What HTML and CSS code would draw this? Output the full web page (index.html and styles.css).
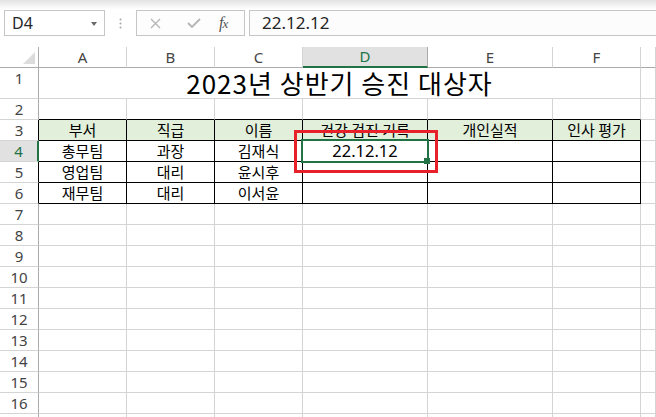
FILE: index.html
```html
<!DOCTYPE html>
<html>
  <head>
    <title>승진 대상자</title>
    <link rel="stylesheet" href="styles.css">
  </head>
  <body>
    <div class="topbar">
      <div class="namebox">
        <span>D4</span>
        <span class="arrow"></span>
      </div>
      <div class="grip">
        <svg width="3" height="11" viewBox="0 0 3 11">
          <circle cx="1.5" cy="1.5" r="1" fill="#a6a6a6" />
          <circle cx="1.5" cy="5.5" r="1" fill="#a6a6a6" />
          <circle cx="1.5" cy="9.5" r="1" fill="#a6a6a6" />
        </svg>
      </div>
      <div class="fxbox">
        <svg class="btn-x" width="11" height="11" viewBox="0 0 11 11">
          <path d="M1 1 L10 10 M10 1 L1 10" stroke="#b4b4b4" stroke-width="1.3" fill="none" />
        </svg>
        <svg class="btn-ok" width="14" height="10" viewBox="0 0 14 10">
          <path d="M1 5 L5 9 L13 1" stroke="#b4b4b4" stroke-width="1.8" fill="none" />
        </svg>
        <span class="fx"><i>f</i><i class="fx-x">x</i></span>
      </div>
      <div class="formula">22.12.12</div>
    </div>

    <div class="sheet">
      <!-- column headers -->
      <div class="corner"></div>
      <div class="hd">A</div>
      <div class="hd">B</div>
      <div class="hd">C</div>
      <div class="hd sel">D</div>
      <div class="hd">E</div>
      <div class="hd">F</div>
      <div class="hd"></div>

      <!-- row 1 -->
      <div class="rh">1</div>
      <div class="c title">2023년 상반기 승진 대상자</div>
      <div class="c"></div>

      <!-- row 2 -->
      <div class="rh">2</div>
      <div class="c above"></div>
      <div class="c above"></div>
      <div class="c above"></div>
      <div class="c above"></div>
      <div class="c above"></div>
      <div class="c above"></div>
      <div class="c"></div>

      <!-- row 3 -->
      <div class="rh edge">3</div>
      <div class="c tbl head">부서</div>
      <div class="c tbl head">직급</div>
      <div class="c tbl head">이름</div>
      <div class="c tbl head">건강 검진 기록</div>
      <div class="c tbl head">개인실적</div>
      <div class="c tbl head">인사 평가</div>
      <div class="c"></div>

      <!-- row 4 -->
      <div class="rh sel">4</div>
      <div class="c tbl">총무팀</div>
      <div class="c tbl">과장</div>
      <div class="c tbl">김재식</div>
      <div class="c tbl date">22.12.12</div>
      <div class="c tbl"></div>
      <div class="c tbl"></div>
      <div class="c"></div>

      <!-- row 5 -->
      <div class="rh edge">5</div>
      <div class="c tbl">영업팀</div>
      <div class="c tbl">대리</div>
      <div class="c tbl">윤시후</div>
      <div class="c tbl"></div>
      <div class="c tbl"></div>
      <div class="c tbl"></div>
      <div class="c"></div>

      <!-- row 6 -->
      <div class="rh edge">6</div>
      <div class="c tbl">재무팀</div>
      <div class="c tbl">대리</div>
      <div class="c tbl">이서윤</div>
      <div class="c tbl"></div>
      <div class="c tbl"></div>
      <div class="c tbl"></div>
      <div class="c"></div>

      <!-- empty rows -->
      <div class="rh">7</div>
      <div class="c"></div><div class="c"></div><div class="c"></div><div class="c"></div><div class="c"></div><div class="c"></div><div class="c"></div>
      <div class="rh">8</div>
      <div class="c"></div><div class="c"></div><div class="c"></div><div class="c"></div><div class="c"></div><div class="c"></div><div class="c"></div>
      <div class="rh">9</div>
      <div class="c"></div><div class="c"></div><div class="c"></div><div class="c"></div><div class="c"></div><div class="c"></div><div class="c"></div>
      <div class="rh">10</div>
      <div class="c"></div><div class="c"></div><div class="c"></div><div class="c"></div><div class="c"></div><div class="c"></div><div class="c"></div>
      <div class="rh">11</div>
      <div class="c"></div><div class="c"></div><div class="c"></div><div class="c"></div><div class="c"></div><div class="c"></div><div class="c"></div>
      <div class="rh">12</div>
      <div class="c"></div><div class="c"></div><div class="c"></div><div class="c"></div><div class="c"></div><div class="c"></div><div class="c"></div>
      <div class="rh">13</div>
      <div class="c"></div><div class="c"></div><div class="c"></div><div class="c"></div><div class="c"></div><div class="c"></div><div class="c"></div>
      <div class="rh">14</div>
      <div class="c"></div><div class="c"></div><div class="c"></div><div class="c"></div><div class="c"></div><div class="c"></div><div class="c"></div>
      <div class="rh">15</div>
      <div class="c"></div><div class="c"></div><div class="c"></div><div class="c"></div><div class="c"></div><div class="c"></div><div class="c"></div>
      <div class="rh">16</div>
      <div class="c"></div><div class="c"></div><div class="c"></div><div class="c"></div><div class="c"></div><div class="c"></div><div class="c"></div>
      <div class="rh">17</div>
      <div class="c"></div><div class="c"></div><div class="c"></div><div class="c"></div><div class="c"></div><div class="c"></div><div class="c"></div>

      <!-- overlays -->
      <div class="selection"></div>
      <div class="fill-handle"></div>
      <div class="mark"></div>
    </div>
  </body>
</html>
```

FILE: styles.css
```css
body {
  margin: 0;
  height: 417px;
  overflow: hidden;
  background: #fff;
  font-family: "Noto Sans", "Noto Sans CJK KR", sans-serif;
}

/* formula bar */
.topbar {
  height: 47px;
  box-sizing: border-box;
  padding: 10px 0 0 4px;
  display: flex;
  align-items: flex-start;
  background: linear-gradient(#e2e2e2, #fbfbfb 8px, #fff 10px);
}
.namebox {
  width: 101px;
  height: 26px;
  box-sizing: border-box;
  border: 1px solid #c6c6c6;
  background: #fff;
  display: flex;
  align-items: center;
  justify-content: space-between;
  padding: 0 7px 0 7px;
  font-size: 16px;
  color: #262626;
}
.arrow {
  width: 0;
  height: 0;
  border-left: 3.5px solid transparent;
  border-right: 3.5px solid transparent;
  border-top: 4px solid #6a6a6a;
  margin-top: 1px;
}
.grip {
  width: 31px;
  height: 26px;
  display: flex;
  align-items: center;
  justify-content: center;
}
.fxbox {
  width: 109px;
  height: 26px;
  box-sizing: border-box;
  border: 1px solid #c6c6c6;
  background: #fdfdfd;
  display: flex;
  align-items: center;
  margin-right: 4px;
}
.btn-x {
  margin-left: 13px;
}
.btn-ok {
  margin-left: 26px;
}
.fx {
  margin-left: 18px;
  font-family: "Liberation Serif", serif;
  font-size: 16px;
  color: #555;
  letter-spacing: -1px;
}
.fx-x {
  font-size: 13px;
}
.formula {
  flex: 1;
  height: 26px;
  box-sizing: border-box;
  border: 1px solid #c6c6c6;
  border-right: none;
  background: #fcfcfc;
  padding-left: 12px;
  font-size: 17px;
  line-height: 24px;
  color: #262626;
}

/* sheet grid */
.sheet {
  position: relative;
  display: grid;
  grid-template-columns: 39px 88px 88px 88px 125px 125px 88px 1fr;
  grid-template-rows: 21px 31px;
  grid-auto-rows: 21px;
}
.corner,
.hd,
.rh,
.c {
  box-sizing: border-box;
  border-right: 1px solid #d4d4d4;
  border-bottom: 1px solid #d4d4d4;
}
.corner {
  position: relative;
  border-right-color: #ababab;
  border-bottom-color: #ababab;
}
.corner::after {
  content: "";
  position: absolute;
  right: 3px;
  bottom: 3px;
  width: 0;
  height: 0;
  border-left: 12px solid transparent;
  border-bottom: 12px solid #dcdcdc;
}
.hd {
  border-bottom-color: #ababab;
  text-align: center;
  font-size: 15px;
  line-height: 20px;
  color: #444;
}
.hd.sel {
  background: #e1e1e1;
  color: #217346;
  border-bottom: 2px solid #217346;
  border-right-color: #ababab;
  line-height: 19px;
}
.rh {
  border-right-color: #ababab;
  text-align: center;
  font-size: 15px;
  line-height: 20px;
  color: #444;
}
.rh.edge {
  border-right-color: #000;
}
.rh.sel {
  background: #e1e1e1;
  color: #217346;
  border-right: 2px solid #217346;
}
.c {
  font-family: "Noto Sans CJK KR", "Noto Sans", sans-serif;
  font-size: 15px;
  line-height: 20px;
  text-align: center;
  color: #000;
}
.title {
  grid-column: span 6;
  font-size: 26px;
  line-height: 30px;
  letter-spacing: 1px;
  overflow: hidden;
}
.above {
  border-bottom-color: #000;
}
.tbl {
  border-right-color: #000;
  border-bottom-color: #000;
}
.head {
  background: #e2efda;
}
.date {
  font-family: "Noto Sans", sans-serif;
  font-size: 16.5px;
}

/* overlays */
.selection {
  position: absolute;
  left: 301px;
  top: 92px;
  width: 128px;
  height: 24px;
  box-sizing: border-box;
  border: 2px solid #217346;
}
.fill-handle {
  position: absolute;
  left: 424px;
  top: 111px;
  width: 6px;
  height: 6px;
  background: #217346;
}
.mark {
  position: absolute;
  left: 294px;
  top: 83px;
  width: 144px;
  height: 43px;
  box-sizing: border-box;
  border: 3px solid #e8202a;
}
```
